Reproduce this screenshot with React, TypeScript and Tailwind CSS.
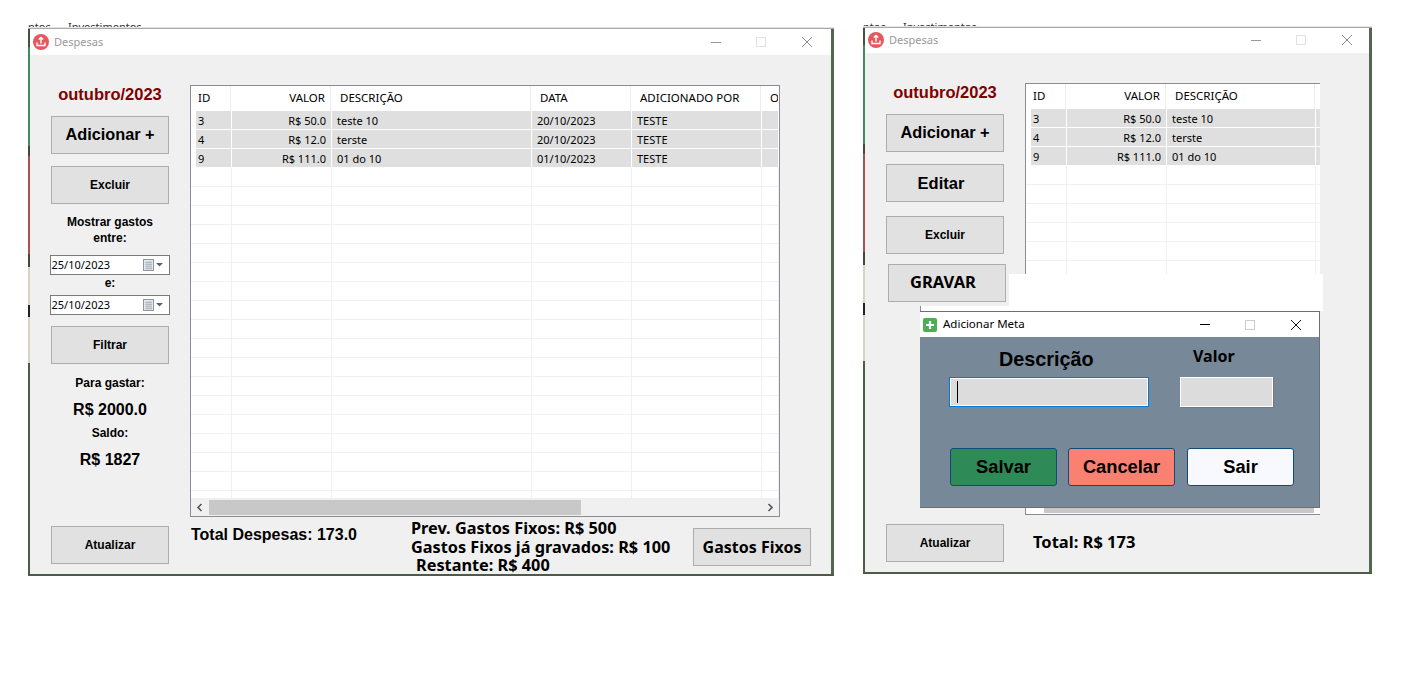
import type { ReactNode } from "react";

const rowsData = [
  ["3", "R$ 50.0", "teste 10", "20/10/2023", "TESTE"],
  ["4", "R$ 12.0", "terste", "20/10/2023", "TESTE"],
  ["9", "R$ 111.0", "01 do 10", "01/10/2023", "TESTE"],
];

const arial = "font-['Liberation_Sans',Arial,sans-serif]";
const noto = "font-['Noto_Sans',sans-serif]";

function AppIcon() {
  return (
    <svg width="16" height="16" viewBox="0 0 16 16" className="shrink-0">
      <circle cx="8" cy="8" r="8" fill="#e2595f" />
      <path d="M8 3.5v6M5.8 5.6 8 3.4l2.2 2.2" fill="none" stroke="#fff" strokeWidth="1.4" />
      <path d="M4 8.5v3h8v-3" fill="none" stroke="#fff" strokeWidth="1.4" />
    </svg>
  );
}

function TitleBar({ title }: { title: string }) {
  return (
    <div className="flex h-[26px] shrink-0 items-center bg-white pl-[5px]">
      <AppIcon />
      <span className={`ml-[5px] text-[11px] text-[#999999] ${noto}`}>{title}</span>
      <div className="ml-auto flex items-center">
        <div className="mr-[35px] h-px w-[10px] bg-[#9a9a9a]" />
        <div className="mr-[35px] h-[10px] w-[10px] border border-[#e2e2e2]" />
        <svg width="12" height="12" viewBox="0 0 12 12" className="mr-[19px]">
          <path d="M1 1l10 10M11 1 1 11" stroke="#8a8a8a" strokeWidth="1" />
        </svg>
      </div>
    </div>
  );
}

function Btn({ children, className }: { children: ReactNode; className: string }) {
  return (
    <div className={`flex h-[38px] w-[118px] shrink-0 items-center justify-center border border-[#adadad] bg-[#e1e1e1] font-bold text-black ${className}`}>
      {children}
    </div>
  );
}

function DateBox({ className }: { className: string }) {
  return (
    <div className={`-ml-px flex h-[20px] w-[120px] shrink-0 items-center border border-[#7a7a7a] bg-white pl-px text-[11px] text-black ${noto} ${className}`}>
      25/10/2023
      <svg width="21" height="12" viewBox="0 0 21 12" className="ml-auto mr-[5px]">
        <rect x="0.5" y="0.5" width="10" height="11" fill="#e4e7ec" stroke="#8f96a3" />
        <path d="M2 3.5h7M2 5.5h7M2 7.5h7M2 9.5h7M4 2v8.5M6 2v8.5M8 2v8.5" stroke="#a9afba" strokeWidth="0.7" />
        <path d="M13 4h7l-3.5 3.5z" fill="#5a6478" />
      </svg>
    </div>
  );
}

function Table({ cols, headers, full, height, width }: {
  cols: number[];
  headers: string[];
  full: boolean;
  height: string;
  width: string;
}) {
  return (
    <div className={`flex shrink-0 flex-col overflow-hidden border-y border-l border-[#8c8c96] bg-white text-[11.5px] text-black ${noto} ${height} ${width} ${full ? "border-r" : ""}`}>
      <div className="flex h-[25px] shrink-0 pl-[5px]">
        {cols.map((c, i) => (
          <div
            key={i}
            style={{ width: c }}
            className={`flex shrink-0 items-center overflow-hidden whitespace-nowrap pb-[2px] ${i === 5 ? "" : "border-r border-[#ededed]"} ${i === 1 ? "justify-end pr-[5px]" : i === 0 ? "pl-[2px]" : "pl-[9px]"}`}
          >
            {headers[i]}
          </div>
        ))}
      </div>
      <div className="flex-1 overflow-hidden text-[11px]">
        {Array.from({ length: 21 }).map((_, r) => {
          const row = rowsData[r];
          return (
            <div key={r} className={`flex h-[19px] border-b pl-[5px] ${row ? "border-white" : "border-[#f0f0f0]"}`}>
              {cols.map((c, i) => (
                <div
                  key={i}
                  style={{ width: i === 0 ? c + 1 : c }}
                  className={`flex shrink-0 items-center overflow-hidden whitespace-nowrap border-r pt-[2px] ${row ? "border-white bg-[#dfdfdf]" : "border-[#f0f0f0]"} ${i === 1 ? "justify-end pr-[5px]" : i === 0 ? "pl-[2px]" : "pl-[5px]"}`}
                >
                  {row ? row[i] : ""}
                </div>
              ))}
            </div>
          );
        })}
      </div>
      {full ? (
        <div className="flex h-[18px] shrink-0 items-center bg-[#f0f0f0]">
          <svg width="18" height="15" viewBox="0 0 18 15"><path d="M10.5 4 7 7.5l3.5 3.5" fill="none" stroke="#555" strokeWidth="1.6" /></svg>
          <div className="h-[15px] w-[372px] bg-[#c8c8c8]" />
          <svg width="18" height="15" viewBox="0 0 18 15" className="ml-auto"><path d="M7.5 4 11 7.5 7.5 11" fill="none" stroke="#555" strokeWidth="1.6" /></svg>
        </div>
      ) : (
        <div className="flex h-[18px] shrink-0 items-center bg-white pl-[18px]">
          <div className="h-[15px] w-[270px] bg-[#c8c8c8]" />
        </div>
      )}
    </div>
  );
}

function Month() {
  return <div className={`flex h-[20px] w-[118px] items-center justify-center whitespace-nowrap text-[16.5px] font-bold text-[#800000] ${arial}`}>outubro/2023</div>;
}

function LeftEdge({ first }: { first: string }) {
  return (
    <div className="absolute left-0 top-0 bottom-0 flex w-[2px] flex-col">
      <div className={`${first} bg-[#45513f]`} />
      <div className="h-[99px] bg-[#3f8d5f]" />
      <div className="h-[10px] bg-[#3f4a3c]" />
      <div className="h-[98px] bg-[#a85353]" />
      <div className="h-[13px] bg-[#3f4a3c]" />
      <div className="h-[38px] bg-[#d9d3c3]" />
      <div className="h-[12px] bg-[#222222]" />
      <div className="h-[46px] bg-[#d9d3c3]" />
      <div className="flex-1 bg-[#4d5c48]" />
    </div>
  );
}

function Sliver({ className }: { className: string }) {
  return (
    <div className={`absolute top-[21px] flex h-[7px] overflow-hidden text-[11px] leading-[12px] text-[#333] ${noto} ${className}`}>
      <span className="w-[40px]">ntos</span>
      <span>Investimentos</span>
    </div>
  );
}

export default function App() {
  return (
    <div className="relative h-[686px] w-[1410px] overflow-hidden bg-white">
      {/* pedaço da janela de trás */}
      <Sliver className="left-[28px] w-[805px]" />
      <Sliver className="left-[863px] w-[508px]" />

      {/* janela 1 */}
      <div className="absolute left-[28px] top-[28px] flex h-[548px] w-[806px] flex-col border-t border-b-2 border-t-[#a9a9a9] border-b-[#4d5c48] bg-[#f0f0f0] shadow-[0_-1px_0_#e4e4e4]">
        <LeftEdge first="h-[18px]" />
        <div className="absolute right-0 top-0 bottom-0 w-[3px] bg-[#55664f]" />
        <div className="bg-white pr-[2px]"><TitleBar title="Despesas" /></div>
        <div className="flex flex-1 pl-[23px]">
          <div className="flex w-[118px] shrink-0 flex-col items-center">
            <div className="mt-[29px]"><Month /></div>
            <Btn className={`mt-[12px] pb-[2px] text-[16.3px] ${arial}`}>Adicionar +</Btn>
            <Btn className={`mt-[12px] text-[12px] ${arial}`}>Excluir</Btn>
            <div className={`mt-[10px] w-[118px] text-center text-[12px] font-bold leading-[16px] ${arial}`}>Mostrar gastos<br />entre:</div>
            <DateBox className="mt-[9px]" />
            <div className={`h-[20px] text-[12px] font-bold leading-[16px] ${arial}`}>e:</div>
            <DateBox className="" />
            <Btn className={`mt-[11px] text-[12px] ${arial}`}>Filtrar</Btn>
            <div className={`mt-[11px] text-[12px] font-bold leading-[16px] ${arial}`}>Para gastar:</div>
            <div className={`mt-[9px] text-[16px] font-bold leading-[20px] ${arial}`}>R$ 2000.0</div>
            <div className={`mt-[5px] text-[12px] font-bold leading-[16px] ${arial}`}>Saldo:</div>
            <div className={`mt-[9px] text-[16px] font-bold leading-[20px] ${arial}`}>R$ 1827</div>
            <Btn className={`mt-[56px] text-[12px] ${arial}`}>Atualizar</Btn>
          </div>
          <div className="ml-[21px] flex flex-col pt-[30px]">
            <Table
              cols={[35, 100, 200, 100, 130, 17]}
              headers={["ID", "VALOR", "DESCRIÇÃO", "DATA", "ADICIONADO POR", "O"]}
              full
              height="h-[432px]"
              width="w-[590px]"
            />
            <div className="flex">
              <div className={`ml-px mt-[8px] w-[220px] whitespace-nowrap text-[16px] font-bold leading-[20px] ${arial}`}>Total Despesas: 173.0</div>
              <div className={`mt-[2px] whitespace-nowrap text-[16.3px] font-bold leading-[18.5px] ${noto}`}>
                <div>Prev. Gastos Fixos: R$ 500</div>
                <div>Gastos Fixos já gravados: R$ 100</div>
                <div className="pl-[5px]">Restante: R$ 400</div>
              </div>
              <Btn className={`-mr-[31px] ml-auto mt-[11px] text-[16px] ${noto}`}>Gastos Fixos</Btn>
            </div>
          </div>
        </div>
      </div>

      {/* janela 2 */}
      <div className="absolute left-[863px] top-[27px] flex h-[547px] w-[509px] flex-col border-t border-b-2 border-t-[#a9a9a9] border-b-[#4d5c48] bg-[#f0f0f0] shadow-[0_-1px_0_#e4e4e4]">
        <LeftEdge first="h-[17px]" />
        <div className="absolute right-0 top-0 bottom-0 w-[3px] bg-[#55664f]" />
        <div className="h-[25px] shrink-0 overflow-hidden bg-white"><div className="-mt-px"><TitleBar title="Despesas" /></div></div>
        <div className="flex flex-1 pl-[23px]">
          <div className="flex w-[118px] shrink-0 flex-col items-center">
            <div className="mt-[29px]"><Month /></div>
            <Btn className={`mt-[12px] pb-[2px] text-[16.3px] ${arial}`}>Adicionar +</Btn>
            <Btn className={`mt-[12px] pr-[8px] text-[16.5px] ${arial}`}>Editar</Btn>
            <Btn className={`mt-[14px] text-[12px] ${arial}`}>Excluir</Btn>
            <Btn className={`ml-[4px] mt-[10px] pb-[2px] pr-[8px] text-[16.5px] ${noto}`}>GRAVAR</Btn>
            <Btn className={`mt-[222px] text-[12px] ${arial}`}>Atualizar</Btn>
          </div>
          <div className="ml-[21px] flex flex-col pt-[30px]">
            <Table
              cols={[35, 100, 149, 10]}
              headers={["ID", "VALOR", "DESCRIÇÃO", ""]}
              full={false}
              height="h-[432px]"
              width="w-[295px]"
            />
            <div className={`ml-[8px] mt-[17px] text-[16.5px] font-bold leading-[20px] ${noto}`}>Total: R$ 173</div>
          </div>
        </div>
      </div>

      {/* recorte branco por cima da tabela */}
      <div className="absolute left-[1009px] top-[274px] h-[37px] w-[314px] bg-white" />
      <div className="absolute left-[920px] top-[306px] h-[5px] w-[400px] border-l border-l-[#8c8c8c] bg-white" />

      {/* dialogo adicionar meta */}
      <div className="absolute left-[920px] top-[311px] flex h-[197px] w-[400px] flex-col border-t border-r border-b border-[#6f6f6f] bg-[#778899]">
        <div className="flex h-[25px] shrink-0 items-center bg-white pl-[3px]">
          <svg width="14" height="14" viewBox="0 0 14 14">
            <rect width="14" height="14" rx="2" fill="#4caf50" />
            <path d="M7 3v8M3 7h8" stroke="#fff" strokeWidth="2.2" />
          </svg>
          <span className={`-mt-[2px] ml-[6px] text-[11.5px] text-black ${noto}`}>Adicionar Meta</span>
          <div className="ml-auto flex items-center">
            <div className="mr-[35px] h-px w-[10px] bg-black" />
            <div className="mr-[35px] h-[10px] w-[10px] border border-[#cccccc]" />
            <svg width="12" height="12" viewBox="0 0 12 12" className="mr-[17px]">
              <path d="M1 1l10 10M11 1 1 11" stroke="#111" strokeWidth="1" />
            </svg>
          </div>
        </div>
        <div className="flex h-[40px] pl-[29px]">
          <div className={`mt-[10px] w-[194px] whitespace-nowrap pl-[50px] text-[19.8px] font-bold leading-[24px] text-black ${arial}`}>Descrição</div>
          <div className={`mt-[8px] pl-[50px] text-[16px] font-bold leading-[22px] text-black ${noto}`}>Valor</div>
        </div>
        <div className="flex pl-[29px]">
          <div className="flex h-[30px] w-[200px] items-center border border-[#0078d7] bg-[#dcdcdc] pl-[7px] shadow-[inset_0_0_0_1px_#ffffff]">
            <div className="h-[22px] w-px bg-black" />
          </div>
          <div className="ml-[31px] h-[30px] w-[93px] border border-white bg-[#dcdcdc] shadow-[1px_1px_0_#777]" />
        </div>
        <div className={`mt-[41px] flex gap-[11px] pl-[30px] text-[18.3px] font-bold text-black ${arial}`}>
          <div className="flex h-[38px] w-[107px] items-center justify-center rounded-[3px] border border-[#0f4a7a] bg-[#2e8b57]">Salvar</div>
          <div className="flex h-[38px] w-[107px] items-center justify-center rounded-[3px] border border-[#0f4a7a] bg-[#fa8072]">Cancelar</div>
          <div className="ml-px flex h-[38px] w-[107px] items-center justify-center rounded-[3px] border border-[#0f4a7a] bg-[#f8f8ff]">Sair</div>
        </div>
      </div>
    </div>
  );
}
